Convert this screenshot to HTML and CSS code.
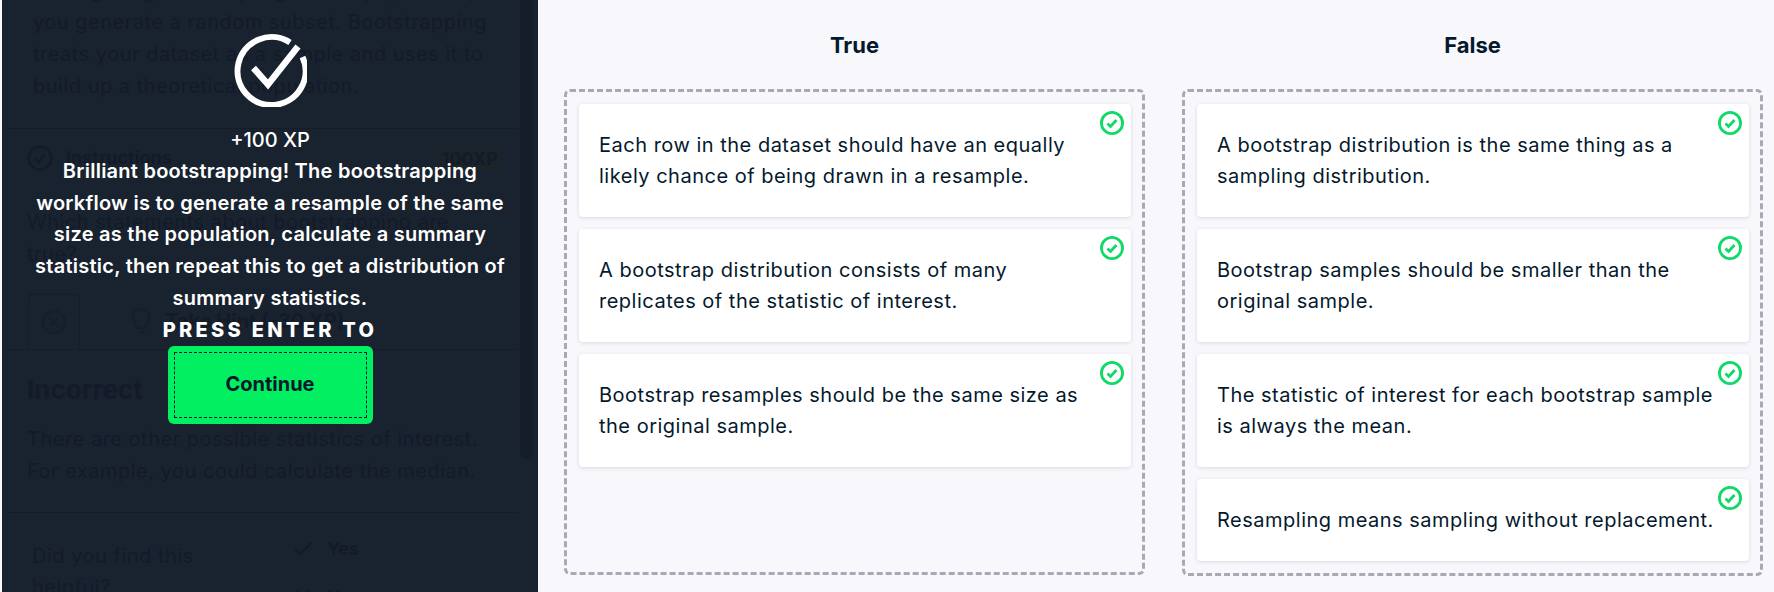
FILE: index.html
```html
<!DOCTYPE html>
<html lang="en">
<head>
  <meta charset="utf-8">
  <title>Bootstrapping</title>
  <link rel="stylesheet" href="styles.css">
</head>
<body>
  <div class="page">
    <aside class="side">
      <div class="side-content">
        <div class="context">
          <p>Through regular sampling from a population,</p>
          <p>you generate a random subset. Bootstrapping</p>
          <p>treats your dataset as a sample and uses it to</p>
          <p>build up a theoretical population.</p>
        </div>
        <div class="instructions">
          <svg class="dim-icon" viewBox="0 0 26 26"><circle cx="13" cy="13" r="11.5"/><path d="M8 13.5l3.5 4L18 9"/></svg>
          <strong>Instructions</strong>
          <span class="xp-badge">100XP</span>
        </div>
        <p class="question">Which statements about bootstrapping are true?</p>
        <div class="hint-row">
          <div class="hint-tab">
            <svg class="dim-icon" viewBox="0 0 26 26"><circle cx="13" cy="13" r="11"/><path d="M8.5 8.5l9 9M17.5 8.5l-9 9"/></svg>
          </div>
          <svg class="dim-icon bulb" viewBox="0 0 20 28"><path d="M6 20c0-4-4.500-6-4.500-11a8.500 8 0 0 1 17 0c0 5-4.500 7-4.500 11zM7 24h6"/></svg>
          <strong>Take Hint (-30 XP)</strong>
        </div>
        <div class="feedback">
          <h2>Incorrect</h2>
          <p>There are other possible statistics of interest.<br>For example, you could calculate the median.</p>
        </div>
        <div class="helpful">
          <p>Did you find this helpful?</p>
          <ul>
            <li><svg class="dim-icon" viewBox="0 0 18 18"><path d="M1 9l5 5L17 3"/></svg>Yes</li>
            <li><svg class="dim-icon" viewBox="0 0 18 18"><path d="M2 3l14 12M16 3L2 15"/></svg>No</li>
          </ul>
        </div>
      </div>
      <div class="scroll-thumb"></div>
      <div class="overlay">
        <svg class="big-check" viewBox="0 0 74 74">
          <path d="M69.500 24A34 34 0 1 1 57 9.500"/>
          <path class="tick" d="M20.500 35l14.500 16.500L65 13.500"/>
        </svg>
        <div class="xp">+100 XP</div>
        <p class="message">Brilliant bootstrapping! The bootstrapping workflow is to generate a resample of the same size as the population, calculate a summary statistic, then repeat this to get a distribution of summary statistics.</p>
        <div class="press">PRESS ENTER TO</div>
        <button class="continue"><span>Continue</span></button>
      </div>
    </aside>
    <main class="board">
      <section class="column">
        <h3>True</h3>
        <div class="dropzone">
          <div class="card">Each row in the dataset should have an equally likely chance of being drawn in a resample.
            <svg class="ok" viewBox="0 0 24 24"><circle cx="12" cy="12" r="10.600"/><path d="M7.500 12.500l3 3 6-6.500"/></svg>
          </div>
          <div class="card">A bootstrap distribution consists of many replicates of the statistic of interest.
            <svg class="ok" viewBox="0 0 24 24"><circle cx="12" cy="12" r="10.600"/><path d="M7.500 12.500l3 3 6-6.500"/></svg>
          </div>
          <div class="card">Bootstrap resamples should be the same size as the original sample.
            <svg class="ok" viewBox="0 0 24 24"><circle cx="12" cy="12" r="10.600"/><path d="M7.500 12.500l3 3 6-6.500"/></svg>
          </div>
        </div>
      </section>
      <section class="column">
        <h3>False</h3>
        <div class="dropzone">
          <div class="card">A bootstrap distribution is the same thing as a sampling distribution.
            <svg class="ok" viewBox="0 0 24 24"><circle cx="12" cy="12" r="10.600"/><path d="M7.500 12.500l3 3 6-6.500"/></svg>
          </div>
          <div class="card">Bootstrap samples should be smaller than the original sample.
            <svg class="ok" viewBox="0 0 24 24"><circle cx="12" cy="12" r="10.600"/><path d="M7.500 12.500l3 3 6-6.500"/></svg>
          </div>
          <div class="card">The statistic of interest for each bootstrap sample is always the mean.
            <svg class="ok" viewBox="0 0 24 24"><circle cx="12" cy="12" r="10.600"/><path d="M7.500 12.500l3 3 6-6.500"/></svg>
          </div>
          <div class="card">Resampling means sampling without replacement.
            <svg class="ok" viewBox="0 0 24 24"><circle cx="12" cy="12" r="10.600"/><path d="M7.500 12.500l3 3 6-6.500"/></svg>
          </div>
        </div>
      </section>
    </main>
  </div>
</body>
</html>
```

FILE: styles.css
```css
:root {
  --navy: #05192d;
  --panel: #19222f;
  --dim: #131b28;
  --dim-line: #151d29;
  --green: #03ef62;
  --check-green: #10d968;
  --light-bg: #f7f7fc;
}
html, body {
  margin: 0;
  height: 592px;
  overflow: hidden;
}
body {
  background-color: var(--light-bg);
  color: var(--navy);
  font-family: Inter, "Liberation Sans", sans-serif;
  font-size: 20px;
  line-height: 31.700px;
  letter-spacing: 0.500px;
}
p, h2, h3, ul {
  margin: 0;
  padding: 0;
}
.page {
  display: flex;
  height: 592px;
  padding-left: 2px;
}

/* left pane, dimmed behind the overlay */
.side {
  position: relative;
  flex: 0 0 536px;
  overflow: hidden;
  background-color: var(--panel);
  color: var(--dim);
}
.side-content {
  width: 510px;
  padding-left: 6px;
  margin-top: -24.500px;
}
.context {
  padding: 0 24px 0 25px;
  white-space: nowrap;
}
.instructions {
  display: flex;
  align-items: center;
  margin-top: 26px;
  padding: 0 15px 0 19px;
  height: 58px;
  border-top: 1px solid var(--dim-line);
  font-size: 18px;
  letter-spacing: 0;
}
.instructions .dim-icon {
  width: 26px;
  height: 26px;
  margin-right: 13px;
}
.xp-badge {
  margin-left: auto;
  padding: 0 5px;
  height: 25px;
  line-height: 25px;
  background-color: #1a2329;
  font-weight: 700;
  font-size: 18px;
}
.question {
  padding: 20px 60px 0 19px;
}
.hint-row {
  display: flex;
  align-items: center;
  margin-top: 23.600px;
  height: 55px;
  border-bottom: 1px solid var(--dim-line);
  padding-left: 20px;
  letter-spacing: 0;
}
.hint-tab {
  display: flex;
  align-items: center;
  justify-content: center;
  width: 52px;
  height: 55px;
  border: 1px solid var(--dim-line);
  border-bottom: none;
  border-radius: 4px 4px 0 0;
  box-sizing: border-box;
  margin-right: 51px;
}
.hint-tab .dim-icon {
  width: 26px;
  height: 26px;
  stroke: #161e2b;
}
.hint-row .bulb {
  width: 20px;
  height: 28px;
  margin-right: 14px;
  stroke: #161e2b;
}
.feedback {
  padding: 22px 19px 24px;
  border-bottom: 1px solid var(--dim-line);
}
.feedback h2 {
  font-size: 26px;
  line-height: 36px;
  margin-bottom: 16px;
  letter-spacing: 0;
}
.helpful {
  display: flex;
  padding: 28px 26px 0 24px;
}
.helpful p {
  width: 190px;
  margin-right: 72px;
  flex-shrink: 0;
}
.helpful ul {
  list-style: none;
  font-weight: 700;
  font-size: 18px;
  letter-spacing: 0;
  margin-top: -16px;
}
.helpful li {
  display: flex;
  align-items: center;
  height: 48px;
}
.helpful .dim-icon {
  width: 18px;
  height: 18px;
  margin-right: 15px;
}
.dim-icon {
  fill: none;
  stroke: var(--dim);
  stroke-width: 2.500;
}
.scroll-thumb {
  position: absolute;
  top: 0;
  left: 518px;
  width: 13px;
  height: 459px;
  border-radius: 0 0 7px 7px;
  background-color: #151d2a;
}

/* result overlay */
.overlay {
  position: absolute;
  top: 0;
  left: 0;
  width: 536px;
  height: 592px;
  box-sizing: border-box;
  padding: 33px 28px 0;
  display: flex;
  flex-direction: column;
  align-items: center;
  color: #fff;
  text-align: center;
}
.big-check {
  width: 74px;
  height: 74px;
  margin-bottom: 18px;
  fill: none;
  stroke: #fff;
  stroke-width: 6;
}
.big-check .tick {
  stroke-width: 6.500;
}
.xp {
  line-height: 31px;
  font-weight: 500;
  letter-spacing: 0;
}
.message {
  line-height: 31.700px;
  font-weight: 600;
  letter-spacing: 0.250px;
}
.press {
  line-height: 30px;
  font-weight: 800;
  letter-spacing: 3.300px;
}
.continue {
  display: block;
  margin-top: 1px;
  width: 205px;
  height: 78px;
  padding: 6px;
  border: none;
  border-radius: 6px;
  background-color: var(--green);
  color: var(--navy);
  font: inherit;
  font-weight: 700;
  letter-spacing: 0;
}
.continue span {
  display: flex;
  align-items: center;
  justify-content: center;
  height: 100%;
  border: 1px dashed var(--navy);
  box-sizing: border-box;
}

/* right pane */
.board {
  flex: 1;
  display: flex;
  gap: 37px;
  padding: 0 11px 17px 26px;
  min-width: 0;
}
.column {
  flex: 1;
  display: flex;
  flex-direction: column;
  min-width: 0;
}
.column h3 {
  text-align: center;
  font-size: 22px;
  font-weight: 700;
  line-height: 90px;
  height: 89px;
  letter-spacing: 0;
}
.dropzone {
  flex: 1;
  display: flex;
  flex-direction: column;
  gap: 12px;
  padding: 12px 11px 12px 12px;
  border: 3px dashed #a9a9b6;
  border-radius: 6px;
}
.card {
  position: relative;
  padding: 25.500px 32px 24.500px 20px;
  line-height: 31.500px;
  background-color: #fff;
  border-radius: 4px;
  box-shadow: 0 1px 4px rgba(5, 25, 45, 0.12);
}
.ok {
  position: absolute;
  top: 7px;
  right: 7px;
  width: 24px;
  height: 24px;
  fill: none;
  stroke: var(--check-green);
  stroke-width: 2.800;
}
```
